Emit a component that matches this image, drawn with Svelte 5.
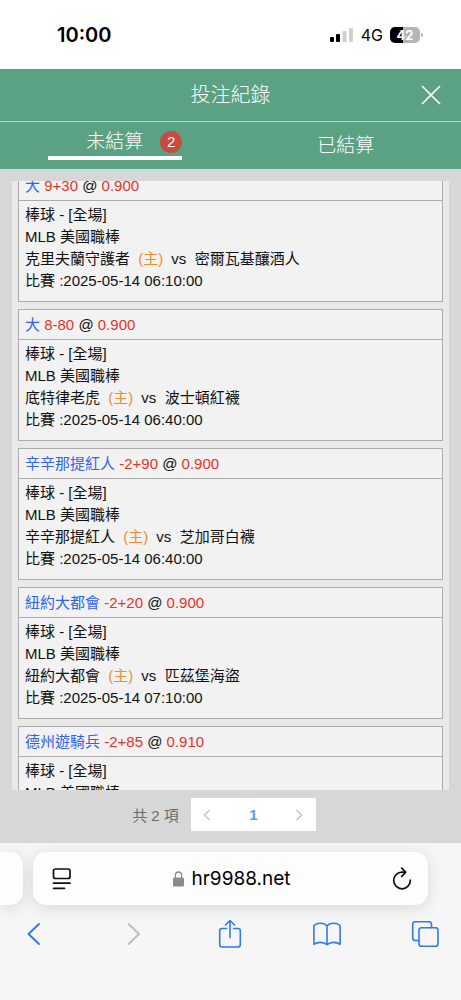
<script lang="ts">
	interface Bet {
		pick: string;
		line: string;
		odds: string;
		match?: { home: string; away: string; time: string };
	}

	const bets: Bet[] = [
		{ pick: '大', line: '9+30', odds: '0.900', match: { home: '克里夫蘭守護者', away: '密爾瓦基釀酒人', time: '2025-05-14 06:10:00' } },
		{ pick: '大', line: '8-80', odds: '0.900', match: { home: '底特律老虎', away: '波士頓紅襪', time: '2025-05-14 06:40:00' } },
		{ pick: '辛辛那提紅人', line: '-2+90', odds: '0.900', match: { home: '辛辛那提紅人', away: '芝加哥白襪', time: '2025-05-14 06:40:00' } },
		{ pick: '紐約大都會', line: '-2+20', odds: '0.900', match: { home: '紐約大都會', away: '匹茲堡海盜', time: '2025-05-14 07:10:00' } },
		{ pick: '德州遊騎兵', line: '-2+85', odds: '0.910' }
	];

	let tab = $state('open');
</script>

<div class="screen">
	<div class="status">
		<span class="clock">10:00</span>
		<div class="status-right">
			<svg width="24" height="16" viewBox="0 0 24 16" aria-hidden="true">
				<rect x="0" y="10" width="4" height="5" rx="1" />
				<rect x="6" y="7" width="4" height="8" rx="1" />
				<rect x="12.500" y="4" width="4" height="11" rx="1" fill="#d0d0d0" />
				<rect x="19" y="1" width="4" height="14" rx="1" fill="#d0d0d0" />
			</svg>
			<span class="network">4G</span>
			<span class="battery">42</span>
		</div>
	</div>

	<header>
		<h1>投注紀錄</h1>
		<button class="close" aria-label="關閉">
			<svg width="20" height="20" viewBox="0 0 20 20" fill="none" stroke="#fff" stroke-width="1.7">
				<path d="M1 1 19 19M19 1 1 19" />
			</svg>
		</button>
	</header>

	<nav class="tabs">
		<button class="tab" class:active={tab === 'open'} onclick={() => (tab = 'open')}>
			<span class="tab-label">未結算<span class="badge">2</span></span>
		</button>
		<button class="tab" class:active={tab === 'settled'} onclick={() => (tab = 'settled')}>
			<span class="tab-label">已結算</span>
		</button>
	</nav>

	<main>
		<div class="list">
			{#each bets as bet}
				<article class="card">
					<div class="card-head">
						<span class="pick">{bet.pick}</span>
						<span class="red">{bet.line}</span> @ <span class="red">{bet.odds}</span>
					</div>
					<div class="card-body">
						<div>棒球 - [全場]</div>
						<div>MLB 美國職棒</div>
						{#if bet.match}
							<div>{bet.match.home} <span class="home">(主)</span> vs &nbsp;{bet.match.away}</div>
							<div>比賽 :{bet.match.time}</div>
						{/if}
					</div>
				</article>
			{/each}
		</div>
	</main>

	<div class="pagination">
		<span>共 2 項</span>
		<div class="pager">
			<button aria-label="上一頁" disabled>
				<svg width="8" height="12" viewBox="0 0 8 12"><path d="M6.500 1 1.500 6l5 5" /></svg>
			</button>
			<button class="current">1</button>
			<button aria-label="下一頁" disabled>
				<svg width="8" height="12" viewBox="0 0 8 12"><path d="m1.500 1 5 5-5 5" /></svg>
			</button>
		</div>
	</div>

	<footer>
		<div class="address-row">
			<div class="prev-tab"></div>
			<div class="address">
				<button aria-label="Page menu">
					<svg width="20" height="24" viewBox="0 0 20 24" fill="none" stroke="#111" stroke-width="1.7" stroke-linecap="round">
						<rect x="1.500" y="2" width="16.500" height="9.500" rx="2" />
						<path d="M1.500 16.200H18M1.500 21.300h11" />
					</svg>
				</button>
				<span class="url">
					<svg width="11" height="16" viewBox="0 0 11 16" aria-hidden="true">
						<rect x="0" y="6.500" width="11" height="9" rx="1.500" fill="#8a8a8f" />
						<path d="M2.400 7V4.300a3.100 3.300 0 0 1 6.200 0V7" fill="none" stroke="#8a8a8f" stroke-width="1.300" />
					</svg>
					hr9988.net
				</span>
				<button aria-label="Reload">
					<svg width="20" height="24" viewBox="0 0 20 24" fill="none" stroke="#111" stroke-width="1.700" stroke-linecap="round" stroke-linejoin="round">
						<path d="M18.300 13.200A8.300 8.300 0 1 1 10 5.200h3" />
						<path d="M9.700 1.200 13.700 5.200 9.700 9.400" />
					</svg>
				</button>
			</div>
		</div>
		<div class="toolbar">
			<button aria-label="Back">
				<svg viewBox="0 0 28 30"><path d="M19 5 8.500 15 19 25" stroke-width="1.900" /></svg>
			</button>
			<button class="dim" aria-label="Forward">
				<svg viewBox="0 0 28 30"><path d="M10.500 5 21 15 10.500 25" stroke-width="1.900" /></svg>
			</button>
			<button aria-label="Share">
				<svg viewBox="0 0 28 30">
					<path d="M10.500 9.500H6a2.300 2.300 0 0 0-2.300 2.300v14A2.300 2.300 0 0 0 6 28h16a2.300 2.300 0 0 0 2.300-2.300v-14A2.300 2.300 0 0 0 22 9.500h-4.500" />
					<path d="M14 18.500V1.500M9.500 6 14 1.500 18.500 6" />
				</svg>
			</button>
			<button aria-label="Bookmarks">
				<svg viewBox="0 0 28 30">
					<path d="M14 7C12.500 5 10 4.200 7.500 4.200S2.200 5 .9 6.800v18.500c1.700-1.200 4-1.900 6.400-1.900s5 .7 6.700 2.300c1.700-1.600 4.300-2.300 6.700-2.300s4.700.7 6.400 1.900V6.800c-1.300-1.800-4.100-2.600-6.600-2.600S15.500 5 14 7Zm0 0v18.500" />
				</svg>
			</button>
			<button aria-label="Tabs">
				<svg viewBox="0 0 28 30">
					<path d="M7.500 21.500H4.300A2.600 2.600 0 0 1 1.700 18.900V5.300a2.600 2.600 0 0 1 2.600-2.600h13.600a2.600 2.600 0 0 1 2.600 2.600v3.400" />
					<rect x="8" y="8.700" width="19" height="18.600" rx="2.600" />
				</svg>
			</button>
		</div>
	</footer>
</div>

<style>
	:global(body) {
		margin: 0;
	}

	.screen {
		display: flex;
		flex-direction: column;
		height: 100vh;
		background: #d7d7d7;
		color: #111;
		font-family: 'Liberation Sans', 'Noto Sans CJK TC', sans-serif;
		font-size: 15px;
	}

	button {
		margin: 0;
		padding: 0;
		border: 0;
		background: none;
		color: inherit;
		font: inherit;
		cursor: pointer;
	}
	svg {
		display: block;
		flex: none;
	}

	.status {
		display: flex;
		flex: none;
		align-items: center;
		justify-content: space-between;
		box-sizing: border-box;
		height: 69px;
		padding: 0 41px 0 57px;
		background: #fff;
		color: #000;
		font-family: Inter, sans-serif;
	}
	.clock {
		font-size: 20px;
		font-weight: 600;
	}
	.status-right {
		display: flex;
		align-items: center;
		gap: 7px;
	}
	.network {
		font-size: 16px;
	}
	.battery {
		position: relative;
		width: 30px;
		height: 16px;
		border-radius: 5px;
		background: linear-gradient(90deg, #000 42%, #b5b5b5 42%);
		color: #fff;
		font-size: 13px;
		font-weight: 700;
		line-height: 16px;
		text-align: center;
	}
	.battery::after {
		position: absolute;
		top: 6px;
		right: -3px;
		width: 2px;
		height: 4px;
		border-radius: 0 2px 2px 0;
		background: #b5b5b5;
		content: '';
	}

	header {
		display: grid;
		flex: none;
		grid-template-columns: 1fr auto 1fr;
		align-items: center;
		height: 52px;
		border-bottom: 1px solid #c5cdc5;
		background: #5ba284;
		color: #fff;
	}
	h1 {
		grid-column: 2;
		margin: 0;
		font-size: 20px;
		font-weight: 300;
		line-height: 28px;
	}
	.close {
		justify-self: end;
		margin-right: 20px;
	}

	.tabs {
		display: grid;
		flex: none;
		grid-template-columns: 1fr 1fr;
		height: 47px;
		background: #5ba284;
		color: #fff;
		font-size: 19px;
		font-weight: 300;
	}
	.tab {
		display: flex;
		align-items: center;
		justify-content: center;
	}
	.tab-label {
		display: flex;
		align-items: center;
		line-height: 28px;
	}
	.active {
		padding-bottom: 4px;
	}
	.active .tab-label {
		padding-left: 38px;
		border-bottom: 4px solid #fff;
	}
	.badge {
		width: 22px;
		height: 22px;
		margin-left: 17px;
		border-radius: 50%;
		background: #c64b41;
		font-size: 15px;
		line-height: 22px;
		text-align: center;
	}

	main {
		flex: 1;
		min-height: 0;
		margin: 12px 12px 0;
		padding: 0 6px;
		overflow: hidden;
		background: #e9e9e9;
	}
	.list {
		display: flex;
		flex-direction: column;
		gap: 7px;
		margin-top: -11px;
	}
	.card {
		border: 1px solid #acacac;
		background: #f2f2f2;
	}
	.card-head {
		padding: 0 6px;
		border-bottom: 1px solid #acacac;
		line-height: 29px;
	}
	.card-body {
		padding: 3px 6px 9px;
		line-height: 22px;
	}
	.pick {
		color: #2f62f5;
	}
	.red {
		color: #ee3124;
	}
	.home {
		margin: 0 4px;
		color: #f28c28;
	}

	.pagination {
		display: flex;
		flex: none;
		align-items: center;
		justify-content: center;
		gap: 12px;
		box-sizing: border-box;
		height: 53px;
		padding: 0 13px 4px 0;
		color: #6b6b6e;
	}
	.pager {
		display: flex;
		height: 33px;
		background: #fff;
	}
	.pager button {
		display: flex;
		align-items: center;
		justify-content: center;
		width: 33px;
	}
	.pager .current {
		width: 59px;
		color: #5a9cf8;
		font-weight: 700;
	}
	.pager svg {
		fill: none;
		stroke: #c0c2c8;
		stroke-width: 1.4;
	}

	footer {
		flex: none;
		box-sizing: border-box;
		height: 157px;
		padding-top: 9px;
		overflow: hidden;
		background: #f6f6f6;
	}
	.address-row {
		display: flex;
		gap: 10px;
		height: 53px;
		padding-right: 33px;
	}
	.prev-tab,
	.address {
		background: #fdfdfd;
		box-shadow: 0 3px 16px rgba(0, 0, 0, 0.12);
	}
	.prev-tab {
		width: 23px;
		border-radius: 0 13px 13px 0;
	}
	.address {
		display: flex;
		flex: 1;
		align-items: center;
		justify-content: space-between;
		padding: 0 16px 0 19px;
		border-radius: 13px;
	}
	.url {
		display: flex;
		align-items: center;
		gap: 7px;
		color: #000;
		font-family: Inter, sans-serif;
		font-size: 19px;
	}
	.toolbar {
		display: flex;
		justify-content: space-between;
		padding: 14px 22px 0 20px;
		color: #2f78f6;
	}
	.toolbar svg {
		width: 28px;
		height: 30px;
		fill: none;
		stroke: currentColor;
		stroke-width: 1.6;
		stroke-linecap: round;
		stroke-linejoin: round;
	}
	.dim {
		color: #bdbdbf;
	}
</style>
